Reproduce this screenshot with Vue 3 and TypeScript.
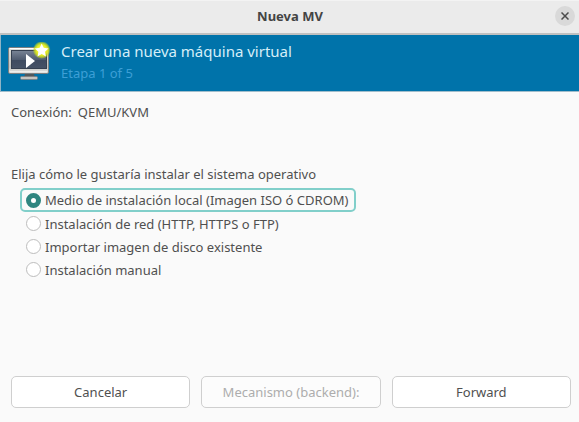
<script setup lang="ts">
import { ref } from 'vue'

interface InstallOption {
  id: string
  label: string
}

const options: InstallOption[] = [
  { id: 'local', label: 'Medio de instalación local (Imagen ISO ó CDROM)' },
  { id: 'red', label: 'Instalación de red (HTTP, HTTPS o FTP)' },
  { id: 'importar', label: 'Importar imagen de disco existente' },
  { id: 'manual', label: 'Instalación manual' },
]

const selected = ref<string>('local')
</script>

<template>
  <div class="window">
    <header class="titlebar">
      <span></span>
      <h1>Nueva MV</h1>
      <button class="close" type="button" aria-label="Cerrar">
        <svg width="8" height="8" viewBox="0 0 8 8" aria-hidden="true">
          <path d="M.5.5 7.5 7.500M7.500.5.5 7.500" stroke="#4c4c4c" stroke-width="1.500" />
        </svg>
      </button>
    </header>

    <section class="banner">
      <svg class="logo" width="46" height="42" viewBox="0 0 46 42" aria-hidden="true">
        <defs>
          <linearGradient id="frame" x1="0" y1="0" x2="0" y2="1">
            <stop offset="0" stop-color="#deded9" />
            <stop offset=".75" stop-color="#c4c5c2" />
            <stop offset="1" stop-color="#e6e6e4" />
          </linearGradient>
          <linearGradient id="screen" x1="0" y1="0" x2="0" y2="1">
            <stop offset="0" stop-color="#7a8596" />
            <stop offset=".5" stop-color="#505c70" />
            <stop offset=".55" stop-color="#3f4b60" />
            <stop offset="1" stop-color="#465266" />
          </linearGradient>
          <radialGradient id="glow">
            <stop offset="0" stop-color="#ffff70" />
            <stop offset=".6" stop-color="#e4ec20" />
            <stop offset=".8" stop-color="#c8dc20" stop-opacity=".75" />
            <stop offset="1" stop-color="#b0d020" stop-opacity="0" />
          </radialGradient>
        </defs>
        <path d="M18 32h9l1 3H17z" fill="#50585c" />
        <rect x="13.500" y="34.500" width="17" height="3" rx="1" fill="#c3c3c0" stroke="#777b7c" stroke-width=".7" />
        <rect x="1.500" y="5.500" width="40" height="26" rx="1.500" fill="url(#frame)" stroke="#7b8082" />
        <path d="M2.500 6.500h38" stroke="#fff" />
        <rect x="4.500" y="8.500" width="35" height="18" fill="url(#screen)" stroke="#364050" />
        <path d="M3 29.500h37" stroke="#ededeb" />
        <path d="M19 12v14l9-7z" fill="#fff" />
        <circle cx="34.700" cy="8" r="9" fill="url(#glow)" />
        <path d="m34.700 1.500 2 4.300 4.800.6-3.500 3.300.9 4.700-4.200-2.300-4.200 2.300.9-4.700-3.500-3.300 4.800-.6z" fill="#fff" />
      </svg>
      <div>
        <h2>Crear una nueva máquina virtual</h2>
        <p>Etapa 1 of 5</p>
      </div>
    </section>

    <form class="content" @submit.prevent>
      <dl class="connection">
        <dt>Conexión:</dt>
        <dd>QEMU/KVM</dd>
      </dl>

      <fieldset>
        <legend>Elija cómo le gustaría instalar el sistema operativo</legend>
        <label
          v-for="option in options"
          :key="option.id"
          class="option"
          :class="{ focused: selected === option.id }"
          :for="option.id"
        >
          <input :id="option.id" v-model="selected" type="radio" name="install" :value="option.id" />
          <span>{{ option.label }}</span>
        </label>
      </fieldset>

      <footer class="actions">
        <button type="button">Cancelar</button>
        <button type="button" disabled>Mecanismo (backend):</button>
        <button type="submit">Forward</button>
      </footer>
    </form>
  </div>
</template>

<style>
body {
  margin: 0;
  background: #fafafa;
}
</style>

<style scoped>
.window {
  box-sizing: border-box;
  min-height: 100vh;
  display: flex;
  flex-direction: column;
  background: #fafafa;
  color: #505050;
  font: 13px/20px "Noto Sans", "Open Sans", sans-serif;
}

h1,
h2,
p,
dl,
dd {
  margin: 0;
}

button {
  font: inherit;
  color: inherit;
}

.titlebar {
  box-sizing: border-box;
  display: grid;
  grid-template-columns: 1fr auto 1fr;
  align-items: center;
  height: 35px;
  padding: 0 4px 2px 5px;
  background: #ebebeb;
  border-top: 1px solid #f3f3f3;
  border-bottom: 2px solid #bfc0c0;
}

h1 {
  font-size: 13px;
  font-weight: 700;
  line-height: 20px;
  color: #444;
}

.close {
  justify-self: end;
  display: flex;
  align-items: center;
  justify-content: center;
  width: 20px;
  height: 20px;
  padding: 0;
  border: 0;
  border-radius: 50%;
  background: #d9d9d9;
}

.banner {
  display: flex;
  gap: 8px;
  height: 56px;
  padding-left: 6px;
  background: #0073aa;
  border-left: 1px solid #8fb4c6;
  border-bottom: 1px solid #a0bdcb;
  color: #d5eef8;
}

.logo {
  flex: none;
  margin-top: 7px;
}

h2 {
  margin-top: 6px;
  font-size: 15px;
  font-weight: 400;
  line-height: 20px;
}

.banner p {
  margin-top: 2px;
  color: #3d9fd6;
}

.content {
  flex: 1;
  display: flex;
  flex-direction: column;
  padding: 10px 8px 14px 11px;
}

.connection {
  display: flex;
  gap: 6px;
}

fieldset {
  display: flex;
  flex-direction: column;
  align-items: flex-start;
  min-width: 0;
  margin: 42px 0 24px;
  padding: 0;
  border: 0;
}

legend {
  padding: 0;
  margin-bottom: 4px;
}

.option {
  box-sizing: border-box;
  display: flex;
  align-items: center;
  gap: 4px;
  height: 23px;
  margin-left: 9px;
  padding: 0 4px;
  border: 2px solid transparent;
  border-radius: 5px;
}

.option.focused {
  height: 24px;
  padding-right: 5px;
  border-color: #81cfca;
}

.option input {
  appearance: none;
  box-sizing: border-box;
  flex: none;
  width: 15px;
  height: 15px;
  margin: 0;
  border: 1px solid #bdbdbd;
  border-radius: 50%;
  background: #fff;
  outline: none;
}

.option input:checked {
  border: 5px solid #2f8580;
}

.actions {
  display: grid;
  grid-template-columns: repeat(3, 1fr);
  gap: 11px;
  margin-top: auto;
}

.actions button {
  height: 32px;
  padding: 0 8px;
  border: 1px solid #cfcfcf;
  border-radius: 5px;
  background: #fff;
}

.actions button:disabled {
  background: #fcfcfc;
  color: #adadad;
}
</style>
